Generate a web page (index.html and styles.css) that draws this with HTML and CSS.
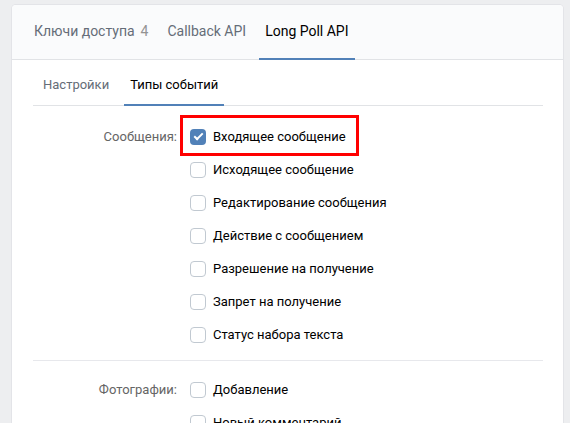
FILE: index.html
```html
<!DOCTYPE html>
<html lang="ru">
  <head>
    <meta charset="UTF-8" />
    <title>Long Poll API</title>
    <link rel="stylesheet" href="styles.css">
  </head>
  <body>
    <div class="page">
      <div class="tabs">
        <div class="tab">Ключи доступа<span class="count">4</span></div>
        <div class="tab">Callback API</div>
        <div class="tab active">Long Poll API</div>
      </div>

      <div class="content">
        <div class="sub-tabs">
          <div class="sub-tab">Настройки</div>
          <div class="sub-tab active">Типы событий</div>
        </div>

        <!-- Сообщения -->
        <div class="section">
          <div class="section-label">Сообщения:</div>
          <div class="section-items">
            <label class="check-row">
              <span class="check checked"></span>Входящее сообщение
              <span class="mark"></span>
            </label>
            <label class="check-row"><span class="check"></span>Исходящее сообщение</label>
            <label class="check-row"><span class="check"></span>Редактирование сообщения</label>
            <label class="check-row"><span class="check"></span>Действие с сообщением</label>
            <label class="check-row"><span class="check"></span>Разрешение на получение</label>
            <label class="check-row"><span class="check"></span>Запрет на получение</label>
            <label class="check-row"><span class="check"></span>Статус набора текста</label>
          </div>
        </div>

        <!-- Фотографии -->
        <div class="section">
          <div class="section-label">Фотографии:</div>
          <div class="section-items">
            <label class="check-row"><span class="check"></span>Добавление</label>
            <label class="check-row"><span class="check"></span>Новый комментарий</label>
          </div>
        </div>
      </div>
    </div>
  </body>
</html>
```

FILE: styles.css
```css
html,
body {
  margin: 0;
  height: 100%;
  overflow: hidden;
  background-color: #edeef0;
  font-family: Roboto, "Noto Sans", sans-serif;
}
body {
  padding: 5px 7px 0 12px;
  box-sizing: border-box;
}

.page {
  background-color: #fff;
  border-radius: 4px 4px 0 0;
  box-shadow: 0 0 0 1px #e3e4e8;
  min-height: 100%;
}

/* верхние вкладки */
.tabs {
  display: flex;
  gap: 7px;
  height: 54px;
  padding-left: 16px;
  background-color: #fafbfc;
  border-bottom: 1px solid #e1e3e6;
  border-radius: 4px 4px 0 0;
}
.tab {
  height: 55px;
  line-height: 53px;
  padding: 0 6px;
  margin-bottom: -1px;
  font-size: 14px;
  color: #656d78;
  border-bottom: 2px solid transparent;
  box-sizing: border-box;
}
.tab.active {
  color: #000;
  border-bottom-color: #5181b8;
}
.count {
  margin-left: 6px;
  color: #939393;
}

.content {
  padding: 0 20px 0 21px;
}

/* вкладки второго уровня */
.sub-tabs {
  display: flex;
  gap: 9px;
  padding: 4px 0 0 4px;
  border-bottom: 1px solid #e1e3e6;
}
.sub-tab {
  height: 42px;
  line-height: 41px;
  padding: 0 6px;
  margin-bottom: -1px;
  font-size: 13px;
  color: #656d78;
  border-bottom: 2px solid transparent;
  box-sizing: border-box;
}
.sub-tab.active {
  color: #000;
  border-bottom-color: #5181b8;
}

/* группы событий */
.section {
  display: flex;
  padding: 14px 0 9px;
  font-size: 13px;
}
.section + .section {
  padding-top: 12px;
  border-top: 1px solid #e7e8ec;
}
.section-label {
  width: 144px;
  padding-right: 13px;
  text-align: right;
  color: #656565;
  line-height: 33px;
}
.section-items {
  display: flex;
  flex-flow: column;
}
.check-row {
  position: relative;
  display: flex;
  align-items: center;
  height: 33px;
  color: #000;
  cursor: pointer;
}
.check {
  width: 16px;
  height: 16px;
  margin-right: 7px;
  border: 1.5px solid #c1c9d1;
  border-radius: 4px;
  box-sizing: border-box;
  background-color: #fff;
  position: relative;
}
.check.checked {
  border: none;
  background-color: #5181b8;
}
.check.checked::after {
  content: "";
  position: absolute;
  left: 4px;
  top: 4px;
  width: 7px;
  height: 3px;
  border-left: 2px solid #fff;
  border-bottom: 2px solid #fff;
  transform: rotate(-45deg);
}

/* красная рамка вокруг первого пункта */
.mark {
  position: absolute;
  left: -10px;
  top: -5px;
  width: 179px;
  height: 41px;
  border: 3px solid #f00;
  box-sizing: border-box;
}
```
